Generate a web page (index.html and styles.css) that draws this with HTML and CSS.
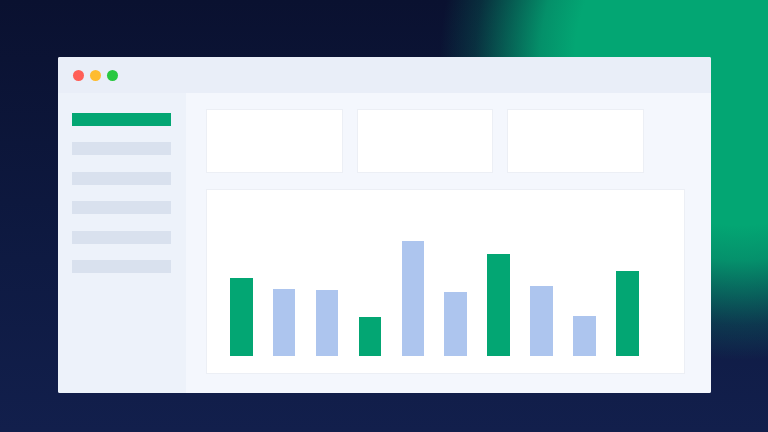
FILE: index.html
```html
<!DOCTYPE html>
<html lang="en">
<head>
<meta charset="utf-8">
<title>Dashboard</title>
<link rel="stylesheet" href="styles.css">
</head>
<body>
<div class="scene">
  <div class="window">
    <div class="titlebar">
      <span class="dot dot-red"></span>
      <span class="dot dot-yellow"></span>
      <span class="dot dot-green"></span>
    </div>
    <div class="win-body">
      <aside class="sidebar">
        <div class="nav-item active"></div>
        <div class="nav-item"></div>
        <div class="nav-item"></div>
        <div class="nav-item"></div>
        <div class="nav-item"></div>
        <div class="nav-item"></div>
      </aside>
      <main class="main">
        <div class="cards">
          <div class="card"></div>
          <div class="card"></div>
          <div class="card"></div>
        </div>
        <div class="chart">
          <div class="bar bar-green" style="height:78px"></div>
          <div class="bar bar-blue" style="height:67px"></div>
          <div class="bar bar-blue" style="height:66px"></div>
          <div class="bar bar-green" style="height:39px"></div>
          <div class="bar bar-blue" style="height:115px"></div>
          <div class="bar bar-blue" style="height:64px"></div>
          <div class="bar bar-green" style="height:102px"></div>
          <div class="bar bar-blue" style="height:70px"></div>
          <div class="bar bar-blue" style="height:40px"></div>
          <div class="bar bar-green" style="height:85px"></div>
        </div>
      </main>
    </div>
  </div>
</div>
</body>
</html>
```
FILE: styles.css
```css
* { box-sizing: border-box; }
html, body {
  margin: 0;
  padding: 0;
  width: 768px;
  height: 432px;
  overflow: hidden;
  font-family: "Liberation Sans", Arial, sans-serif;
}
.scene {
  width: 768px;
  height: 432px;
  padding: 57px 0 0 58px;
  background:
    radial-gradient(circle at 740px 60px,
      rgba(3,166,115,1) 0,
      rgba(3,166,115,1) 165px,
      rgba(3,166,115,0.85) 200px,
      rgba(3,166,115,0.5) 235px,
      rgba(3,166,115,0.2) 265px,
      rgba(3,166,115,0) 300px),
    linear-gradient(180deg, #0a1130 0%, #0e1a42 60%, #121f4c 100%);
}
.window {
  width: 653px;
  height: 336px;
  display: flex;
  flex-direction: column;
  border-radius: 2px;
  overflow: hidden;
  background: #f4f7fd;
}
.titlebar {
  height: 36px;
  flex: none;
  display: flex;
  align-items: center;
  gap: 6px;
  padding-left: 15px;
  background: #e9eef8;
}
.dot {
  width: 11px;
  height: 11px;
  border-radius: 50%;
}
.dot-red { background: #ff5f57; }
.dot-yellow { background: #febc2e; }
.dot-green { background: #28c840; }
.win-body {
  flex: 1;
  display: flex;
  min-height: 0;
}
.sidebar {
  width: 128px;
  flex: none;
  background: #edf2fa;
  padding: 20px 0 0 14px;
  display: flex;
  flex-direction: column;
  gap: 16.4px;
}
.nav-item {
  width: 99px;
  height: 13px;
  background: #d9e1ee;
}
.nav-item.active { background: #03a673; }
.main {
  flex: 1;
  display: flex;
  flex-direction: column;
  padding: 16px 26px 19px 20px;
  background: #f4f7fd;
}
.cards {
  display: flex;
  gap: 14px;
  flex: none;
}
.card {
  width: 136.5px;
  height: 64px;
  background: #ffffff;
  border: 1px solid #eceff5;
}
.chart {
  flex: 1;
  margin-top: 16px;
  background: #ffffff;
  border: 1px solid #eceff5;
  display: flex;
  align-items: flex-end;
  gap: 20.4px;
  padding: 0 0 17px 23px;
}
.bar { width: 22.5px; }
.bar-green { background: #03a673; }
.bar-blue { background: #adc5ee; }
```
